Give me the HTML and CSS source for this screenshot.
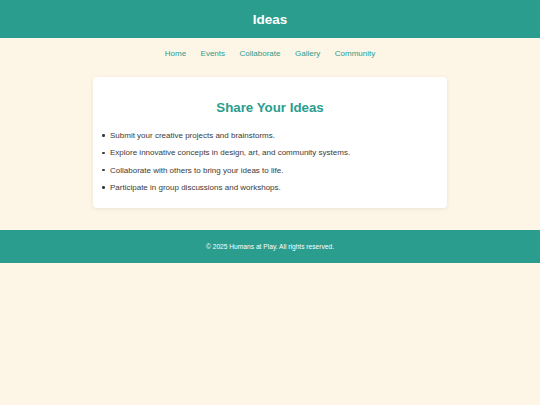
FILE: index.html
```html
<!DOCTYPE html>
<html lang="en">
<head>
<meta charset="utf-8">
<title>Ideas</title>
<link rel="stylesheet" href="styles.css">
</head>
<body>
<header class="site-header">
  <h1 class="site-title">Ideas</h1>
</header>
<nav class="site-nav">
  <ul class="nav-list">
    <li><a href="#">Home</a></li>
    <li><a href="#">Events</a></li>
    <li><a href="#">Collaborate</a></li>
    <li><a href="#">Gallery</a></li>
    <li><a href="#">Community</a></li>
  </ul>
</nav>
<main class="content">
  <section class="card">
    <h2 class="card-title">Share Your Ideas</h2>
    <ul class="idea-list">
      <li>Submit your creative projects and brainstorms.</li>
      <li>Explore innovative concepts in design, art, and community systems.</li>
      <li>Collaborate with others to bring your ideas to life.</li>
      <li>Participate in group discussions and workshops.</li>
    </ul>
  </section>
</main>
<footer class="site-footer">
  <p>&copy; 2025 Humans at Play. All rights reserved.</p>
</footer>
</body>
</html>
```

FILE: styles.css
```css
* { box-sizing: border-box; }
html, body {
  margin: 0;
  padding: 0;
  background: #fdf5e6;
  font-family: "Liberation Sans", Arial, sans-serif;
  font-size: 8px;
  color: #3a3a3a;
}
.site-header {
  background: #2a9d8f;
  height: 38px;
  display: flex;
  align-items: center;
  justify-content: center;
}
.site-title {
  margin: 0;
  color: #fff;
  font-size: 13.5px;
  font-weight: bold;
}
.site-nav {
  padding: 11px 0 7px;
}
.nav-list {
  list-style: none;
  margin: 0;
  padding: 0;
  display: flex;
  justify-content: center;
  gap: 14.5px;
}
.nav-list a {
  color: #2a9d8f;
  text-decoration: none;
  font-size: 8px;
}
.content {
  padding: 12px 0 22px;
  display: flex;
  justify-content: center;
}
.card {
  width: 354px;
  background: #fff;
  border-radius: 4px;
  box-shadow: 0 1px 4px rgba(0,0,0,0.08);
  padding: 23px 0 8px;
}
.card-title {
  margin: 0 0 16px;
  text-align: center;
  color: #2a9d8f;
  font-size: 13.3px;
  font-weight: bold;
}
.idea-list {
  margin: 0;
  padding: 0 16px 0 17px;
  list-style: none;
}
.idea-list li {
  display: flex;
  align-items: center;
  margin-bottom: 8px;
  line-height: 9.3px;
}
.idea-list li::before {
  content: "";
  flex: none;
  width: 2.5px;
  height: 2.5px;
  border-radius: 50%;
  background: #3a3a3a;
  margin-left: -8px;
  margin-right: 5.5px;
}
.site-footer {
  background: #2a9d8f;
  height: 33px;
  display: flex;
  align-items: center;
  justify-content: center;
}
.site-footer p {
  margin: 0;
  color: #fff;
  font-size: 6.65px;
}
```
